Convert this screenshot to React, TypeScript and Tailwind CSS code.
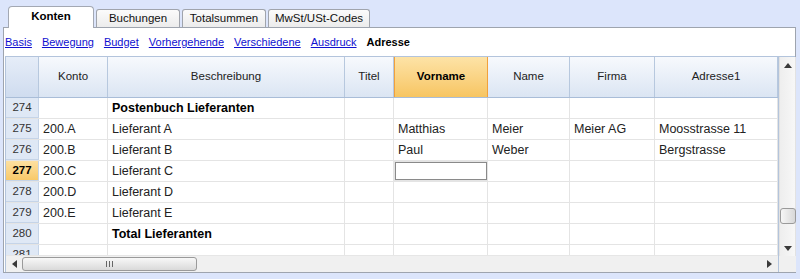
import type { ReactNode } from 'react';

type Col = { key: string; label: string; w: string };

const cols: Col[] = [
  { key: 'konto', label: 'Konto', w: 'w-[69px]' },
  { key: 'beschr', label: 'Beschreibung', w: 'w-[237px]' },
  { key: 'titel', label: 'Titel', w: 'w-[49px]' },
  { key: 'vorname', label: 'Vorname', w: 'w-[94px]' },
  { key: 'name', label: 'Name', w: 'w-[82px]' },
  { key: 'firma', label: 'Firma', w: 'w-[85px]' },
  { key: 'adresse', label: 'Adresse1', w: 'w-[123px]' },
];

type Row = { nr: number; bold?: boolean; cells: Record<string, string> };

const rows: Row[] = [
  { nr: 274, bold: true, cells: { beschr: 'Postenbuch Lieferanten' } },
  {
    nr: 275,
    cells: { konto: '200.A', beschr: 'Lieferant A', vorname: 'Matthias', name: 'Meier', firma: 'Meier AG', adresse: 'Moosstrasse 11' },
  },
  { nr: 276, cells: { konto: '200.B', beschr: 'Lieferant B', vorname: 'Paul', name: 'Weber', adresse: 'Bergstrasse' } },
  { nr: 277, cells: { konto: '200.C', beschr: 'Lieferant C' } },
  { nr: 278, cells: { konto: '200.D', beschr: 'Lieferant D' } },
  { nr: 279, cells: { konto: '200.E', beschr: 'Lieferant E' } },
  { nr: 280, bold: true, cells: { beschr: 'Total Lieferanten' } },
  { nr: 281, cells: {} },
];

const tabs = ['Konten', 'Buchungen', 'Totalsummen', 'MwSt/USt-Codes'];
const links = ['Basis', 'Bewegung', 'Budget', 'Vorhergehende', 'Verschiedene', 'Ausdruck'];

function Tab({ label, active }: { label: string; active?: boolean }) {
  if (active) {
    return (
      <div className="relative z-10 -mb-px flex h-[22px] w-[86px] items-center justify-center rounded-t-[4px] border border-b-0 border-[#a3a8b3] bg-white pb-[2px] text-[11.5px] font-bold text-black">
        {label}
      </div>
    );
  }
  const w = label === 'MwSt/USt-Codes' ? 'w-[102px]' : 'w-[84px]';
  return (
    <div
      className={`flex h-[18px] ${w} items-center justify-center rounded-t-[3px] border border-b-0 border-[#a0a4ac] bg-gradient-to-b from-[#fbfbfb] to-[#ececec] text-[11.5px] text-[#111]`}
    >
      {label}
    </div>
  );
}

function Triangle({ dir }: { dir: 'up' | 'down' | 'left' | 'right' }) {
  const pts = {
    up: '0,5 4,0 8,5',
    down: '0,0 8,0 4,5',
    left: '5,0 5,8 0,4',
    right: '0,0 0,8 5,4',
  }[dir];
  const vertical = dir === 'up' || dir === 'down';
  return (
    <svg width={vertical ? 8 : 5} height={vertical ? 5 : 8} viewBox={vertical ? '0 0 8 5' : '0 0 5 8'}>
      <polygon points={pts} fill="#3a3a3a" />
    </svg>
  );
}

function Cell({ w, children, className = '' }: { w: string; children?: ReactNode; className?: string }) {
  return (
    <div className={`${w} flex h-full shrink-0 items-center overflow-hidden whitespace-nowrap border-r border-[#e4e4e4] px-[4px] ${className}`}>
      {children}
    </div>
  );
}

export default function App() {
  return (
    <div className="relative h-[279px] w-[800px] overflow-hidden bg-[#dce5fb] font-['Liberation_Sans',Arial,sans-serif]">
      {/* tab strip */}
      <div className="flex h-[27px] items-end gap-[2px] pl-[8px]">
        {tabs.map((t, i) => (
          <Tab key={t} label={t} active={i === 0} />
        ))}
      </div>

      {/* panel */}
      <div className="ml-[3px] flex h-[246px] w-[793px] flex-col border border-[#9ea4ae] bg-white">
        <div className="flex h-[28px] items-center gap-[10px] pl-[1px] text-[11px]">
          {links.map((l) => (
            <span key={l} className="text-[#1010d0] underline">
              {l}
            </span>
          ))}
          <span className="font-bold text-black">Adresse</span>
        </div>

        {/* grid */}
        <div className="ml-[1px] flex h-[216px] border-l border-t border-[#b3c4dc]">
          <div className="flex w-[772px] flex-col">
            {/* header */}
            <div className="flex h-[41px] shrink-0 border-b border-[#a9bdd8] bg-gradient-to-b from-[#f7f9fd] to-[#dbe5f3] text-[11.5px] text-[#222]">
              <div className="h-full w-[33px] shrink-0 border-r border-[#b7c8de] bg-gradient-to-b from-[#e6edf8] to-[#cfdcef]" />
              {cols.map((c) =>
                c.key === 'vorname' ? (
                  <div
                    key={c.key}
                    className={`${c.w} flex h-full shrink-0 items-center justify-center border-x border-[#f1a13c] bg-gradient-to-b from-[#fde3a6] to-[#f7c561] font-bold text-black`}
                  >
                    {c.label}
                  </div>
                ) : (
                  <div
                    key={c.key}
                    className={`${c.w} flex h-full shrink-0 items-center justify-center border-r border-[#b7c8de]`}
                  >
                    {c.label}
                  </div>
                ),
              )}
            </div>

            {/* body */}
            <div className="h-[158px] overflow-hidden">
              {rows.map((r) => {
                const sel = r.nr === 277;
                return (
                  <div key={r.nr} className="flex h-[21px] border-b border-[#e4e4e4] text-[12.5px] text-[#222]">
                    <div
                      className={`flex h-full w-[33px] shrink-0 items-center justify-center border-b border-r border-[#c5d4e8] text-[11.5px] ${
                        sel
                          ? 'bg-gradient-to-b from-[#fde0a0] to-[#f8c969] font-bold text-black'
                          : 'bg-[#dfe8f5] text-[#333]'
                      }`}
                    >
                      {r.nr}
                    </div>
                    {cols.map((c) => (
                      <Cell
                        key={c.key}
                        w={c.w}
                        className={`${r.bold ? 'font-bold text-black' : ''} ${
                          sel && c.key === 'vorname' ? 'border border-[#333] shadow-[inset_0_0_0_1px_#8a8a8a]' : ''
                        }`}
                      >
                        {r.cells[c.key] ?? ''}
                      </Cell>
                    ))}
                  </div>
                );
              })}
            </div>

            {/* horizontal scrollbar */}
            <div className="flex h-[17px] items-center border-t border-[#e6e6e6] bg-[#f0f0f0] px-[6px]">
              <Triangle dir="left" />
              <div className="ml-[5px] flex h-[14px] w-[175px] items-center justify-center rounded-[3px] border border-[#9a9a9a] bg-gradient-to-b from-[#f8f8f8] to-[#dadada]">
                <div className="flex gap-[2px]">
                  <span className="h-[6px] w-px bg-[#666]" />
                  <span className="h-[6px] w-px bg-[#666]" />
                  <span className="h-[6px] w-px bg-[#666]" />
                </div>
              </div>
              <div className="flex-1" />
              <Triangle dir="right" />
            </div>
          </div>

          {/* vertical scrollbar */}
          <div className="flex w-[18px] flex-col border-l border-[#b3c4dc] bg-[#f0f0f0]">
            <div className="flex h-[199px] flex-col items-center border-x border-[#e2e2e2] bg-gradient-to-r from-[#eeeeee] to-[#f7f7f7]">
              <div className="mt-[6px]">
                <Triangle dir="up" />
              </div>
              <div className="mt-[140px] h-[16px] w-[16px] rounded-[3px] border border-[#9a9a9a] bg-gradient-to-r from-[#f6f6f6] to-[#d8d8d8]" />
              <div className="mt-[22px]">
                <Triangle dir="down" />
              </div>
            </div>
            <div className="flex-1 bg-[#f0f0f0]" />
          </div>
        </div>
      </div>
    </div>
  );
}
